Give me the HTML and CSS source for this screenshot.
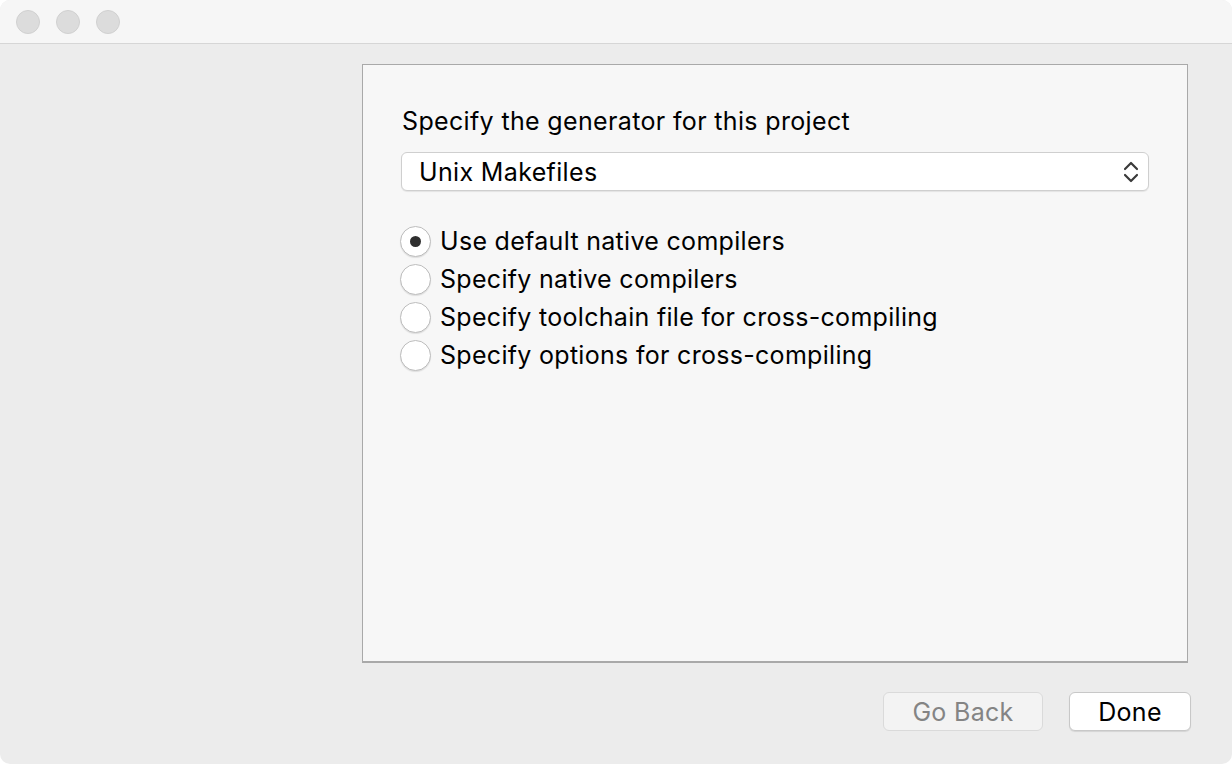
FILE: index.html
```html
<!DOCTYPE html>
<html>
<head>
<meta charset="utf-8">
<link rel="stylesheet" href="styles.css">
</head>
<body>
<div class="window">
  <div class="titlebar">
    <span class="light"></span><span class="light"></span><span class="light"></span>
  </div>
  <div class="content">
    <div class="panel">
      <div class="label">Specify the generator for this project</div>
      <div class="select">
        <span>Unix Makefiles</span>
        <svg class="chev" width="16" height="24" viewBox="0 0 16 24"><path d="M2 9 L8 3 L14 9 M2 15 L8 21 L14 15" fill="none" stroke="#3a3a3a" stroke-width="2.2" stroke-linecap="round" stroke-linejoin="round"/></svg>
      </div>
      <div class="radios">
        <div class="radio-row"><span class="radio checked"></span><span>Use default native compilers</span></div>
        <div class="radio-row"><span class="radio"></span><span>Specify native compilers</span></div>
        <div class="radio-row"><span class="radio"></span><span>Specify toolchain file for cross-compiling</span></div>
        <div class="radio-row"><span class="radio"></span><span>Specify options for cross-compiling</span></div>
      </div>
    </div>
    <div class="buttons">
      <button class="btn disabled">Go Back</button>
      <button class="btn primary">Done</button>
    </div>
  </div>
</div>
</body>
</html>
```

FILE: styles.css
```css
html, body {
  margin: 0;
  padding: 0;
  background: #ffffff;
}
body {
  font-family: "Inter", "Liberation Sans", sans-serif;
  color: #000;
}
.window {
  width: 1232px;
  height: 764px;
  border-radius: 10px;
  overflow: hidden;
  background: #ececec;
  display: flex;
  flex-direction: column;
}
.titlebar {
  height: 43px;
  flex: none;
  background: #f6f6f6;
  border-bottom: 1px solid #d6d6d6;
  display: flex;
  align-items: center;
  padding-left: 16px;
  gap: 16px;
}
.light {
  width: 22px;
  height: 22px;
  border-radius: 50%;
  background: #dcdcdc;
  border: 1px solid #d0d0d0;
}
.content {
  flex: 1;
  display: flex;
  flex-direction: column;
  padding: 20px 41px 0 362px;
}
.panel {
  width: 748px;
  height: 557px;
  background: #f7f7f7;
  border: 1px solid #a9a9a9;
  border-bottom-width: 2px;
  padding: 39px 38px 0 38px;
  box-sizing: content-box;
  display: flex;
  flex-direction: column;
}
.label {
  font-size: 25px;
  line-height: 34px;
  letter-spacing: 0.35px;
  margin-left: 1px;
}
.select {
  margin-top: 14px;
  height: 37px;
  background: #fff;
  border: 1px solid #cfcfcf;
  border-radius: 6px;
  box-shadow: 0 1px 1px rgba(0,0,0,0.08);
  display: flex;
  align-items: center;
  justify-content: space-between;
  padding: 0 9px 0 17px;
  font-size: 25px;
  letter-spacing: 0.35px;
  box-sizing: content-box;
  width: 720px;
  margin-left: 0;
}
.radios {
  margin-top: 34px;
  display: flex;
  flex-direction: column;
  gap: 6px;
}
.radio-row {
  display: flex;
  align-items: center;
  gap: 9px;
  height: 32px;
  font-size: 25px;
  letter-spacing: 0.3px;
  margin-left: -1px;
}
.radio {
  width: 29px;
  height: 29px;
  border-radius: 50%;
  background: #fff;
  border: 1px solid #bdbdbd;
  box-shadow: 0 1px 1px rgba(0,0,0,0.1);
  display: flex;
  align-items: center;
  justify-content: center;
  flex: none;
}
.radio.checked::after {
  content: "";
  width: 11px;
  height: 11px;
  border-radius: 50%;
  background: #2f2f2f;
}
.buttons {
  display: flex;
  justify-content: flex-end;
  gap: 26px;
  margin-top: 29px;
}
.btn {
  font-family: inherit;
  font-size: 25px;
  letter-spacing: 0.3px;
  height: 39px;
  border-radius: 6px;
  padding: 0;
  cursor: default;
}
.btn.disabled {
  width: 160px;
  background: #f3f3f3;
  color: #848484;
  border: 1px solid #dadada;
}
.btn.primary {
  width: 122px;
  background: #fff;
  color: #000;
  border: 1px solid #c8c8c8;
  box-shadow: 0 1px 1px rgba(0,0,0,0.1);
}
```
